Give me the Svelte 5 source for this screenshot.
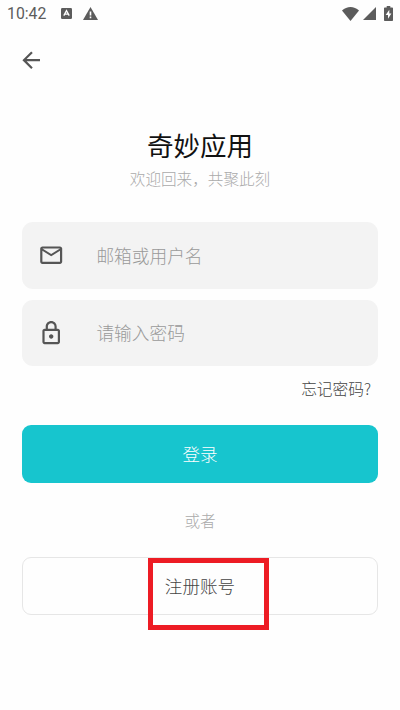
<script>
	let account = $state('');
	let password = $state('');
</script>

<main>
	<!--Status bar-->
	<div class="status">
		<span class="time">10:42</span>
		<svg class="app" viewBox="0 0 11 11">
			<rect width="11" height="11" rx="1.2" fill="#5c5c5c" />
			<path d="M2.8 7.6L5.5 2.6L8.2 7.6M4 6.2H7" fill="none" stroke="#fff" stroke-width="1.3" />
		</svg>
		<svg class="warn" viewBox="0 0 15 13">
			<path d="M7.5 0L15 13H0z" fill="#5c5c5c" />
			<path d="M6.7 4.4h1.6v4H6.7zM6.7 9.6h1.6v1.6H6.7z" fill="#fff" />
		</svg>
		<div class="signals">
			<svg width="17" height="14" viewBox="0 0 17 14">
				<path d="M8.5 14L0 3.6C4.8-1.2 12.2-1.2 17 3.6z" />
			</svg>
			<svg class="cell" width="13" height="13" viewBox="0 0 13 13">
				<path d="M13 0V13H0z" />
			</svg>
			<svg class="battery" width="9" height="15" viewBox="0 0 9 15">
				<path d="M2.7 0h3.6v1.5H8.2q.8 0 .8.8V14.2q0 .8-.8.8H.8Q0 15 0 14.2V2.3q0-.8.8-.8H2.7z" />
				<path d="M5.3 3.7L1.7 9H4v3.7L7.4 7.4H5.3z" fill="#fff" />
			</svg>
		</div>
	</div>

	<button class="back" aria-label="返回">
		<svg class="icon" viewBox="0 0 24 24">
			<path d="M20 11H7.83l5.59-5.59L12 4l-8 8 8 8 1.41-1.41L7.83 13H20v-2z" />
		</svg>
	</button>

	<h1>奇妙应用</h1>
	<p class="welcome">欢迎回来，共聚此刻</p>

	<!--Login form-->
	<label class="field">
		<svg class="icon" viewBox="0 0 24 24">
			<path d="M22 6c0-1.1-.9-2-2-2H4c-1.1 0-2 .9-2 2v12c0 1.1.9 2 2 2h16c1.1 0 2-.9 2-2V6zm-2 0l-8 5-8-5h16zm0 12H4V8l8 5 8-5v10z" />
		</svg>
		<input type="text" placeholder="邮箱或用户名" bind:value={account}>
	</label>
	<label class="field">
		<svg class="icon" viewBox="0 0 24 24">
			<path d="M18 8h-1V6c0-2.76-2.24-5-5-5S7 3.24 7 6v2H6c-1.1 0-2 .9-2 2v10c0 1.1.9 2 2 2h12c1.1 0 2-.9 2-2V10c0-1.1-.9-2-2-2zM9 6c0-1.66 1.34-3 3-3s3 1.34 3 3v2H9V6zm9 14H6V10h12v10zm-6-3c1.1 0 2-.9 2-2s-.9-2-2-2-2 .9-2 2 .9 2 2 2z" />
		</svg>
		<input type="password" placeholder="请输入密码" bind:value={password}>
	</label>
	<div class="forgot">忘记密码?</div>

	<button class="login">登录</button>
	<p class="or">或者</p>

	<div class="signup">
		<button class="register">注册账号</button>
		<div class="mark"></div>
	</div>
</main>

<style>
	:global(body) {
		background: #fefefe;
	}

	main {
		box-sizing: border-box;
		height: 710px;
		padding: 0 22px;
		overflow: hidden;
		font-family: "Noto Sans CJK SC", "Noto Sans", sans-serif;
		font-weight: 300;
	}

	button {
		display: block;
		padding: 0;
		border: none;
		background: none;
		font-family: inherit;
		font-weight: inherit;
	}

	svg {
		display: block;
		flex: none;
		fill: #5c5c5c;
	}

	.status {
		display: flex;
		align-items: center;
		height: 27px;
		margin: 0 -15px;
	}

	.time {
		width: 54px;
		font-family: Roboto, sans-serif;
		font-size: 15.8px;
		font-weight: 400;
		color: #5c5c5c;
	}

	.app {
		width: 11px;
		height: 11px;
	}

	.warn {
		width: 15px;
		height: 13px;
		margin-left: 11px;
	}

	.signals {
		display: flex;
		align-items: center;
		margin-left: auto;
	}

	.cell {
		margin-left: 4px;
	}

	.battery {
		margin-left: 8px;
	}

	.icon {
		width: 26.4px;
		height: 26.4px;
		fill: #555;
	}

	.back {
		margin: 20px 0 0 -4px;
	}

	h1 {
		margin: 53px 0 0;
		font-size: 26.5px;
		line-height: 38px;
		font-weight: 400;
		text-align: center;
		color: #111;
	}

	.welcome {
		margin: 3px 0 32px;
		font-size: 15.6px;
		line-height: 23px;
		text-align: center;
		color: #aaa;
	}

	.field {
		display: flex;
		align-items: center;
		box-sizing: border-box;
		height: 66.5px;
		margin-bottom: 11px;
		padding-left: 16px;
		border-radius: 11px;
		background: #f3f3f3;
	}

	input {
		flex: 1;
		min-width: 0;
		margin-left: 32px;
		padding: 0 0 2px;
		border: none;
		outline: none;
		background: none;
		font-family: inherit;
		font-size: 17.7px;
		font-weight: inherit;
		color: #444;
	}

	input::placeholder {
		color: #999;
	}

	.forgot {
		padding-right: 7px;
		font-size: 15.7px;
		line-height: 23px;
		text-align: right;
		color: #444;
	}

	.login {
		width: 100%;
		height: 58px;
		margin-top: 25px;
		padding-bottom: 2px;
		border-radius: 9px;
		background: #17c5ce;
		font-size: 17.6px;
		color: #fff;
	}

	.or {
		margin: 26px 0 25px;
		font-size: 15.6px;
		line-height: 23px;
		text-align: center;
		color: #aaa;
	}

	.signup {
		position: relative;
	}

	.register {
		width: 100%;
		height: 58px;
		padding-bottom: 2px;
		border: 1px solid #e6e6e6;
		border-radius: 9px;
		font-size: 17.6px;
		color: #444;
	}

	/* Red frame drawn over the register button */
	.mark {
		position: absolute;
		top: 1px;
		left: 126px;
		box-sizing: border-box;
		width: 121px;
		height: 72px;
		border: 5px solid #ed1c24;
	}
</style>
